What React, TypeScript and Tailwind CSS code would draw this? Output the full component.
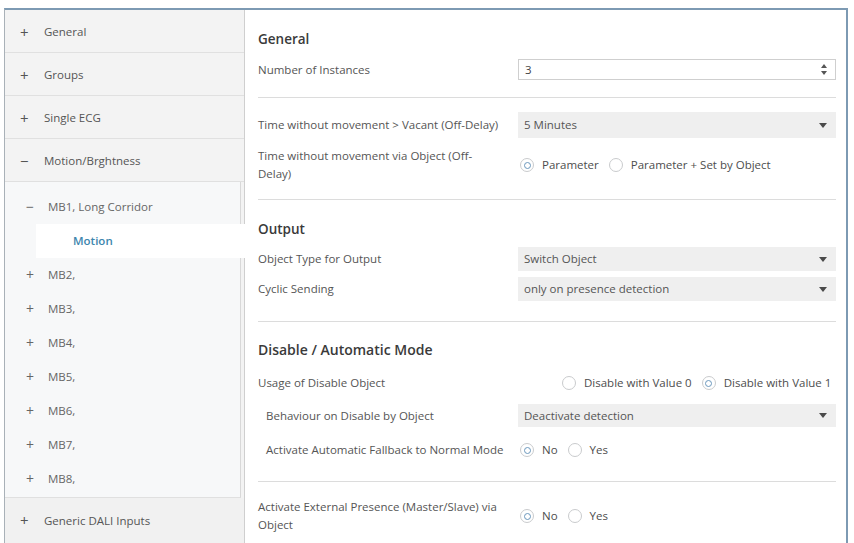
import React from "react";

const font = { fontFamily: '"Open Sans", "Noto Sans", sans-serif' };

function Caret() {
  return (
    <svg width="8" height="5" viewBox="0 0 8 5" className="shrink-0">
      <path d="M0 0 L8 0 L4 5 Z" fill="#4a4a4a" />
    </svg>
  );
}

function Radio({ checked, label }: { checked?: boolean; label: string }) {
  return (
    <div className="flex items-center gap-[8px] mr-[10px] whitespace-nowrap">
      <span className="w-[14px] h-[14px] shrink-0 rounded-full border border-[#c9cbcd] bg-white flex items-center justify-center">
        {checked && <span className="w-[7px] h-[7px] rounded-full border-[1.5px] border-[#6b98bd]" />}
      </span>
      <span className="text-[#4d4d4d]">{label}</span>
    </div>
  );
}

function Select({ value, h = "h-[24px]" }: { value: string; h?: string }) {
  return (
    <div className={`flex-1 min-w-0 ${h} bg-[#efefef] flex items-center justify-between pl-[6px] pr-[9px] text-[#555]`}>
      <span>{value}</span>
      <Caret />
    </div>
  );
}

function Sep() {
  return <div className="h-px bg-[#dcdcdc]" />;
}

function TopItem({ label, open }: { label: string; open?: boolean }) {
  return (
    <div className="h-[43px] border-b border-[#e0e0e0] flex items-center pt-[2px] pl-[15px] text-[#555]">
      <span className="w-[24px] text-[15px] leading-none text-[#555]">{open ? "−" : "+"}</span>
      <span>{label}</span>
    </div>
  );
}

function SubItem({ label, open }: { label: string; open?: boolean }) {
  return (
    <div className="h-[34px] flex items-center pl-[21px] text-[#666]">
      <span className="w-[22px] text-[14px] leading-none text-[#666]">{open ? "−" : "+"}</span>
      <span>{label}</span>
    </div>
  );
}

export default function App() {
  return (
    <div className="w-[854px] h-[543px] bg-white pt-[8px] pl-[4px] pr-[6px] text-[11.5px] overflow-hidden" style={font}>
      <div className="flex h-full border-t-2 border-t-[#7d9ab3] border-l border-l-[#a9b1b8] border-r-2 border-r-[#7d9ab3]">
        {/* Sidebar */}
        <div className="w-[240px] shrink-0 bg-[#f3f3f3] border-r border-[#cfcfcf] flex flex-col">
          <TopItem label="General" />
          <TopItem label="Groups" />
          <TopItem label="Single ECG" />
          <TopItem label="Motion/Brghtness" open />
          <div className="bg-[#f7f8f9] border-b border-[#e0e0e0] mr-[3px] border-r border-r-[#d8d8d8] pt-[8px] h-[316px]">
            <SubItem label="MB1, Long Corridor" open />
            <div className="relative z-10 h-[34px] ml-[31px] -mr-[12px] bg-white flex items-center pl-[37px] font-semibold text-[#3d86ad]">
              Motion
            </div>
            {["MB2,", "MB3,", "MB4,", "MB5,", "MB6,", "MB7,", "MB8,"].map((m) => (
              <SubItem key={m} label={m} />
            ))}
          </div>
          <div className="flex-1 flex items-center pl-[15px] text-[#555] bg-[#f1f1f1]">
            <span className="w-[24px] text-[15px] leading-none text-[#555]">+</span>
            <span>Generic DALI Inputs</span>
          </div>
        </div>

        {/* Content */}
        <div className="flex-1 min-w-0 bg-white pt-[18px] pl-[13px] pr-[10px] text-[#555]">
          <div className="h-[22px] leading-[22px] text-[13.5px] font-semibold text-[#3a3a3a]">General</div>
          <div className="mt-[9px] h-[21px] flex items-center">
            <div className="w-[260px] shrink-0">Number of Instances</div>
            <div className="flex-1 h-full border border-[#cfcfcf] flex items-center justify-between pl-[6px] pr-[8px] text-[#444]">
              <span>3</span>
              <svg width="6" height="11" viewBox="0 0 6 11">
                <path d="M0 4 L6 4 L3 0 Z M0 7 L6 7 L3 11 Z" fill="#555" />
              </svg>
            </div>
          </div>
          <div className="mt-[17px]"><Sep /></div>
          <div className="mt-[14px] h-[26px] flex items-center">
            <div className="w-[260px] shrink-0">Time without movement &gt; Vacant (Off-Delay)</div>
            <Select value="5 Minutes" h="h-[26px]" />
          </div>
          <div className="mt-[9px] h-[36px] flex items-center">
            <div className="w-[260px] shrink-0 leading-[18px] pr-[22px]">Time without movement via Object (Off-Delay)</div>
            <div className="flex items-center pl-[2px]">
              <Radio checked label="Parameter" />
              <Radio label="Parameter + Set by Object" />
            </div>
          </div>
          <div className="mt-[16px]"><Sep /></div>

          <div className="mt-[18px] h-[22px] leading-[22px] text-[13.5px] font-semibold text-[#3a3a3a]">Output</div>
          <div className="mt-[7px] h-[24px] flex items-center">
            <div className="w-[260px] shrink-0">Object Type for Output</div>
            <Select value="Switch Object" />
          </div>
          <div className="mt-[6px] h-[24px] flex items-center">
            <div className="w-[260px] shrink-0">Cyclic Sending</div>
            <Select value="only on presence detection" />
          </div>
          <div className="mt-[20px]"><Sep /></div>

          <div className="mt-[17px] h-[22px] leading-[22px] text-[14px] font-semibold text-[#3a3a3a]">Disable / Automatic Mode</div>
          <div className="mt-[10px] h-[24px] flex items-center">
            <div className="w-[260px] shrink-0">Usage of Disable Object</div>
            <div className="flex items-center pl-[44px]">
              <Radio label="Disable with Value 0" />
              <Radio checked label="Disable with Value 1" />
            </div>
          </div>
          <div className="mt-[9px] h-[23px] flex items-center">
            <div className="w-[260px] shrink-0 pl-[8px]">Behaviour on Disable by Object</div>
            <Select value="Deactivate detection" h="h-[23px]" />
          </div>
          <div className="mt-[11px] h-[24px] flex items-center">
            <div className="w-[260px] shrink-0 pl-[8px] whitespace-nowrap">Activate Automatic Fallback to Normal Mode</div>
            <div className="flex items-center pl-[2px]">
              <Radio checked label="No" />
              <Radio label="Yes" />
            </div>
          </div>
          <div className="mt-[19px]"><Sep /></div>
          <div className="mt-[16px] h-[36px] flex items-center">
            <div className="w-[260px] shrink-0 leading-[18px] pr-[10px]">Activate External Presence (Master/Slave) via Object</div>
            <div className="flex items-center pl-[2px]">
              <Radio checked label="No" />
              <Radio label="Yes" />
            </div>
          </div>
        </div>
      </div>
    </div>
  );
}
